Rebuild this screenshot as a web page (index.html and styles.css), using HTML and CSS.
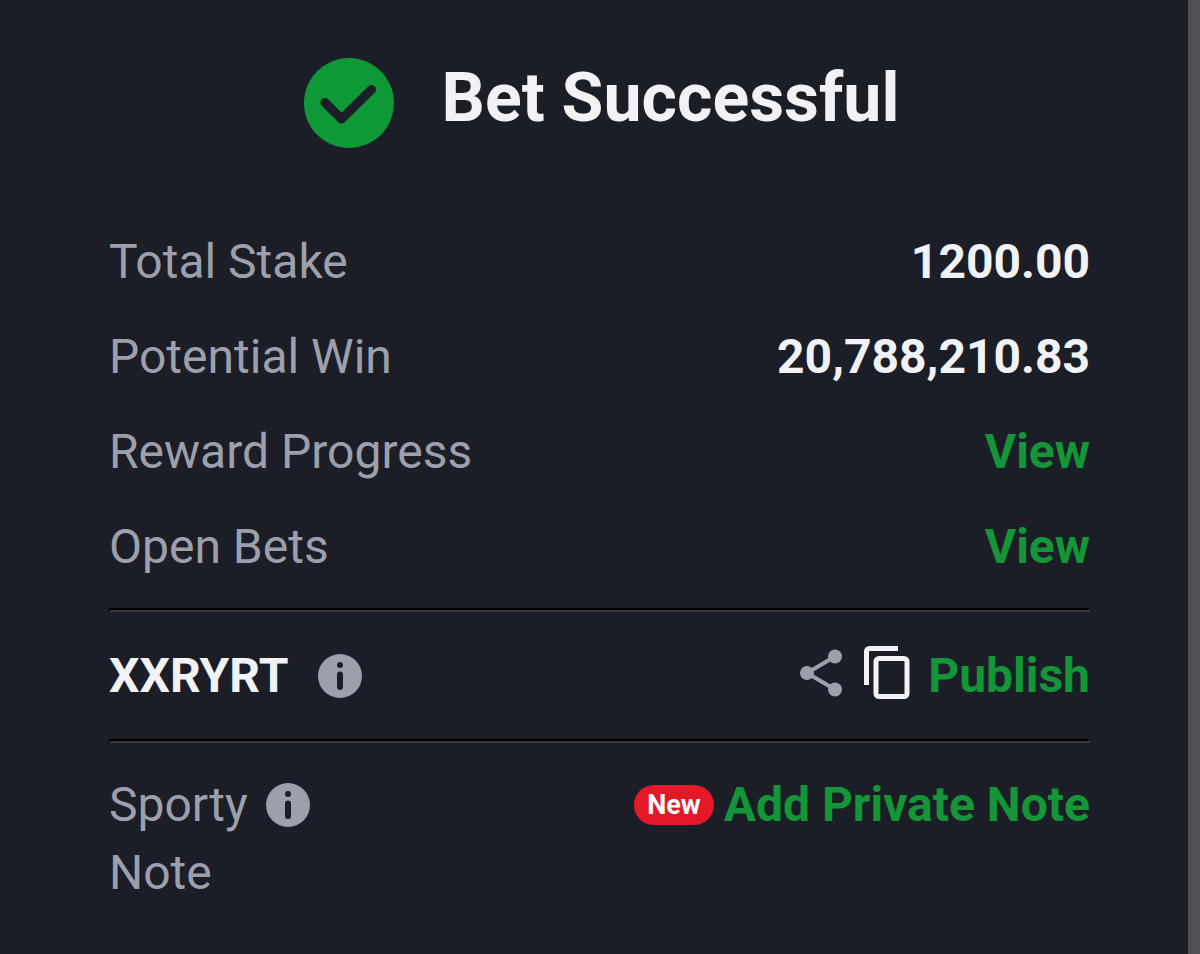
FILE: index.html
```html
<!DOCTYPE html>
<html lang="en">
<head>
<meta charset="utf-8">
<meta name="viewport" content="width=device-width, initial-scale=1">
<title>Bet Successful</title>
<link rel="stylesheet" href="styles.css">
</head>
<body>
<main class="panel">
  <header class="header">
    <svg class="check" viewBox="0 0 90 90" aria-hidden="true">
      <circle cx="45" cy="45" r="45" fill="#0f9837"/>
      <path d="M21 44.500 L37.500 61 L67.500 31.500" fill="none" stroke="#1b1e26" stroke-width="9" stroke-linecap="round" stroke-linejoin="round"/>
    </svg>
    <h1 class="title">Bet Successful</h1>
  </header>
  <dl class="summary">
    <div class="row"><dt class="label">Total Stake</dt><dd class="value">1200.00</dd></div>
    <div class="row"><dt class="label">Potential Win</dt><dd class="value">20,788,210.83</dd></div>
    <div class="row"><dt class="label">Reward Progress</dt><dd class="value"><a class="action" href="#rewards">View</a></dd></div>
    <div class="row"><dt class="label">Open Bets</dt><dd class="value"><a class="action" href="#bets">View</a></dd></div>
  </dl>
  <hr class="divider">
  <section class="row code-row">
    <div class="group code-group">
      <span class="code">XXRYRT</span>
      <button class="icon-button" type="button" aria-label="About booking code">
        <svg class="info" viewBox="0 0 44 44"><circle cx="22" cy="22" r="22" fill="#9ca0ad"/><circle cx="22" cy="11" r="3" fill="#1b1e26"/><path d="M22 20.500V33" stroke="#1b1e26" stroke-width="6" stroke-linecap="round"/></svg>
      </button>
    </div>
    <div class="group tools">
      <button class="icon-button raised" type="button" aria-label="Share">
        <svg class="share" viewBox="0 0 42 48"><g fill="#9ca0ad"><circle cx="7" cy="24" r="7"/><circle cx="35" cy="7.500" r="7"/><circle cx="35" cy="40.500" r="7"/></g><path d="M35 7.500 7 24 35 40.500" fill="none" stroke="#9ca0ad" stroke-width="4"/></svg>
      </button>
      <button class="icon-button raised copy-button" type="button" aria-label="Copy">
        <svg class="copy" viewBox="0 0 46 54"><path d="M2.500 39V5.500a3 3 0 0 1 3-3H34" fill="none" stroke="#f1f2f6" stroke-width="5"/><rect x="12" y="12.500" width="31" height="38" rx="3" fill="none" stroke="#f1f2f6" stroke-width="5"/></svg>
      </button>
      <a class="action" href="#publish">Publish</a>
    </div>
  </section>
  <hr class="divider">
  <section class="row note-row">
    <div class="group note-group">
      <span class="label note-label">Sporty Note</span>
      <button class="icon-button" type="button" aria-label="About Sporty Note">
        <svg class="info" viewBox="0 0 44 44"><circle cx="22" cy="22" r="22" fill="#9ca0ad"/><circle cx="22" cy="11" r="3" fill="#1b1e26"/><path d="M22 20.500V33" stroke="#1b1e26" stroke-width="6" stroke-linecap="round"/></svg>
      </button>
    </div>
    <div class="group note-actions">
      <span class="badge">New</span>
      <a class="action" href="#note">Add Private Note</a>
    </div>
  </section>
</main>
</body>
</html>
```
FILE: styles.css
```css
* {
  box-sizing: border-box;
}

body {
  margin: 0;
  min-height: 100vh;
  background: #1b1e26;
  border-right: 12px solid #4f5053;
  color: #f1f2f6;
  font-family: Roboto, sans-serif;
  font-size: 48px;
  line-height: 68px;
}

.panel {
  padding: 58px 98px 40px 109px;
}

.header {
  display: flex;
  justify-content: center;
  gap: 48px;
  padding-left: 4px;
}

.check {
  width: 90px;
  height: 90px;
}

.title {
  margin: 0;
  font-size: 68px;
  font-weight: 700;
  line-height: 80px;
}

.summary {
  display: grid;
  gap: 27px;
  margin: 0;
  padding: 80px 0 27px;
}

.row {
  display: flex;
  justify-content: space-between;
}

.label {
  color: #9ca0ad;
}

.value {
  margin: 0;
  font-weight: 700;
}

.action {
  color: #149638;
  font-weight: 700;
  text-decoration: none;
}

.divider {
  margin: 0;
  border: 2px solid;
  border-color: #000 #36383f #36383f #000;
}

.group {
  display: flex;
  align-items: center;
}

.icon-button {
  display: flex;
  padding: 0;
  border: 0;
  background: none;
  cursor: pointer;
}

.raised {
  padding-bottom: 7px;
}

.code-row {
  padding: 30px 0 29px;
}

.code-group {
  gap: 30px;
}

.code {
  font-weight: 700;
}

.info {
  width: 44px;
  height: 44px;
}

.share {
  width: 42px;
  height: 48px;
}

.copy {
  width: 46px;
  height: 54px;
}

.tools {
  gap: 18px;
}

.copy-button {
  margin-left: 4px;
}

.note-row {
  align-items: flex-start;
  padding-top: 28px;
}

.note-group {
  align-items: flex-start;
  gap: 18px;
}

.note-group .icon-button {
  padding-top: 12px;
}

.note-label {
  width: min-content;
}

.note-actions {
  gap: 10px;
}

.badge {
  padding: 0 13px;
  border-radius: 20px;
  background: #e41827;
  color: #fff;
  font-size: 27px;
  font-weight: 700;
  line-height: 40px;
}
```
